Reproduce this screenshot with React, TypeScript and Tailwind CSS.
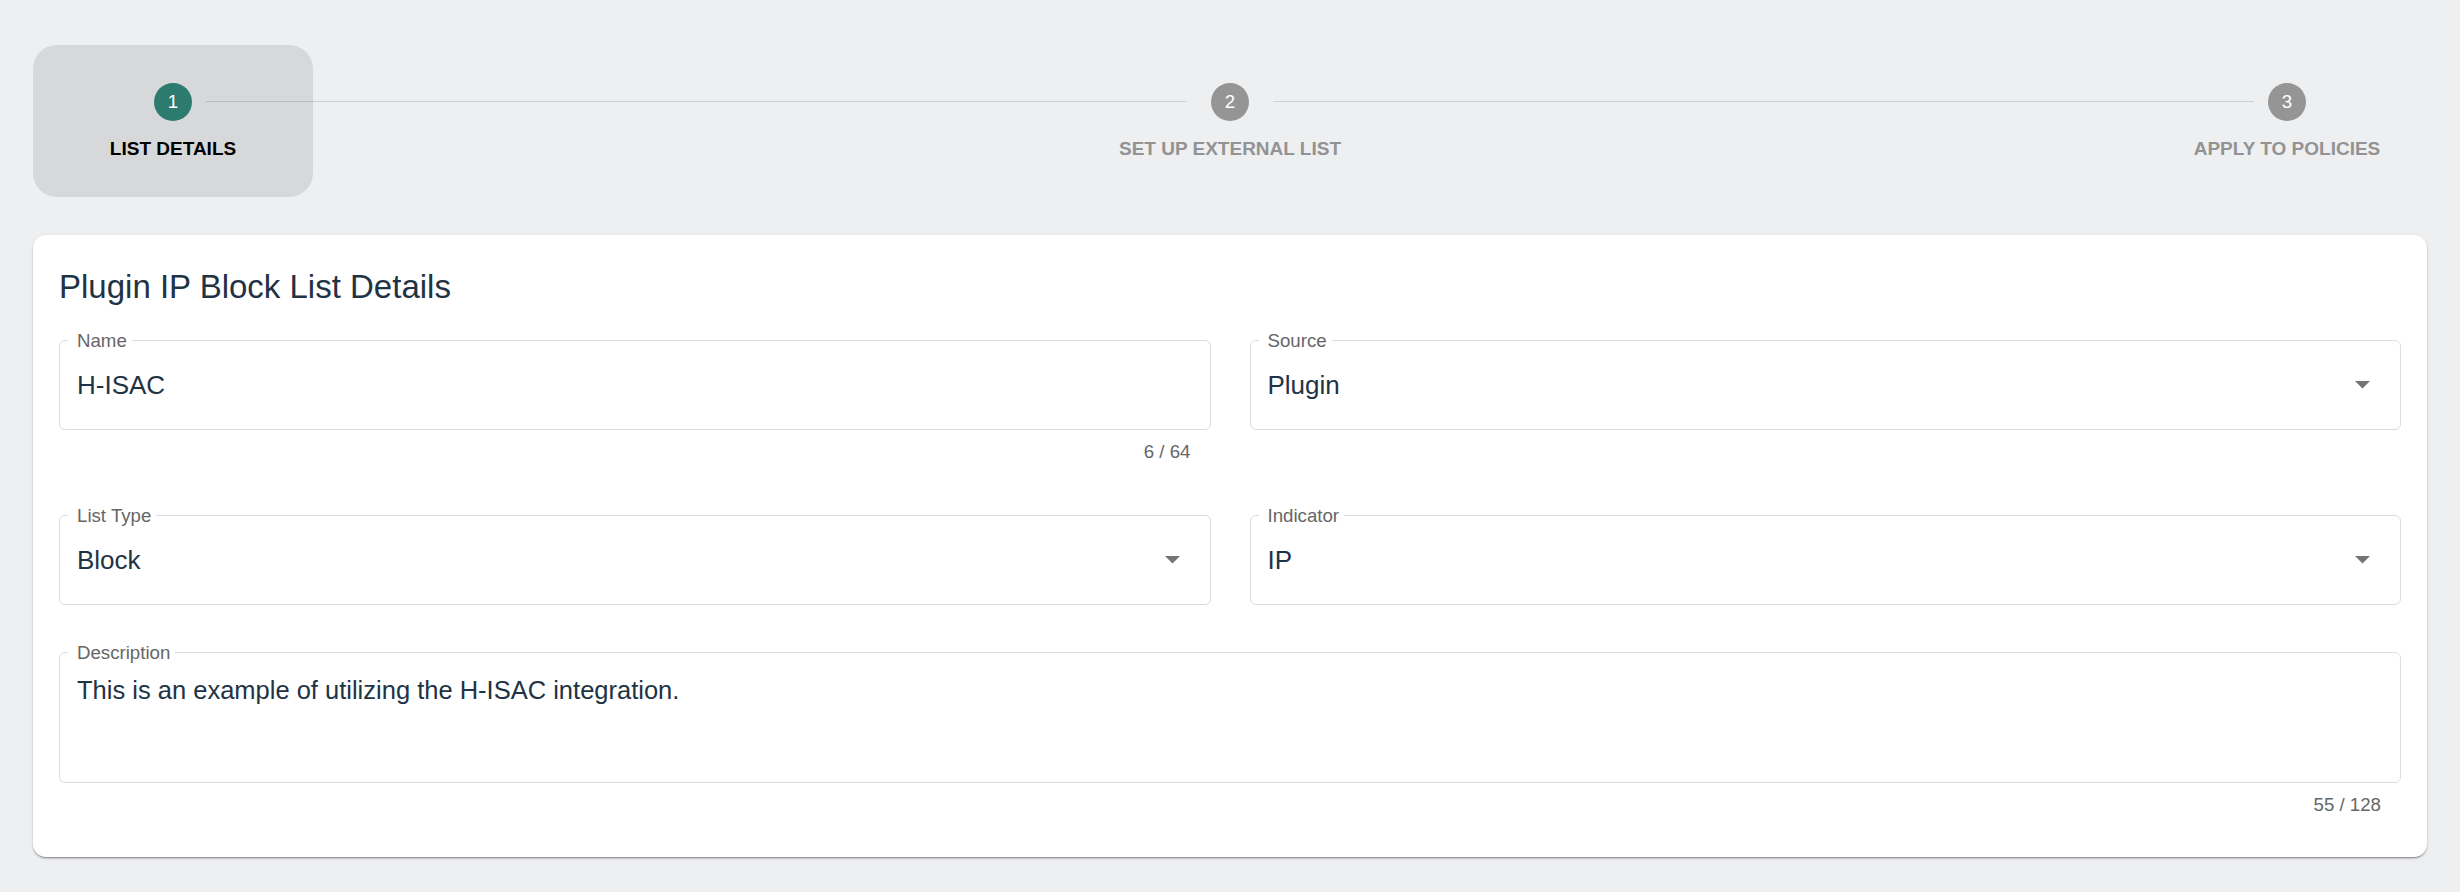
import React from 'react';

type StepProps = { n: number; label: string; active?: boolean };

function Step({ n, label, active }: StepProps) {
    return (
        <div
            className={`w-[280px] shrink-0 rounded-[24px] pt-[38px] pb-[37px] flex flex-col items-center ${
                active ? 'bg-[#d7d8da]' : ''
            }`}
        >
            <div
                className={`w-[38px] h-[38px] rounded-full flex items-center justify-center text-white text-[18.67px] leading-none ${
                    active ? 'bg-[#2c7b6e]' : 'bg-[#959595]'
                }`}
            >
                {n}
            </div>
            <div
                className={`mt-[16.5px] text-[19px] leading-[22px] font-bold whitespace-nowrap ${
                    active ? 'text-black' : 'text-[#939393]'
                }`}
            >
                {label}
            </div>
        </div>
    );
}

function DropArrow() {
    return (
        <svg width="15" height="8" viewBox="0 0 15 8" className="shrink-0">
            <path d="M0 0h15l-7.5 7.5z" fill="#757575" />
        </svg>
    );
}

type FieldProps = {
    label: string;
    value: string;
    select?: boolean;
    multiline?: boolean;
    counter?: string;
};

function Field({ label, value, select, multiline, counter }: FieldProps) {
    return (
        <div className="min-w-0">
            <fieldset className="min-w-0 border border-[#dcdcdc] rounded-[6px]">
                <legend className="ml-[8px] pl-[9px] pr-[5px] text-[18.67px] leading-[20px] text-[#666]">
                    {label}
                </legend>
                {multiline ? (
                    <div className="pl-[17px] pr-[30px] pt-[12px] pb-[77px] text-[25.5px] leading-[30px] text-[#1e3344]">
                        {value}
                    </div>
                ) : (
                    <div className="flex items-center pl-[17px] pr-[30px] pt-[19px] pb-[29px]">
                        <span className="flex-1 text-[26px] leading-[30px] text-[#1e3344]">{value}</span>
                        {select && <DropArrow />}
                    </div>
                )}
            </fieldset>
            {counter && (
                <div className="mt-[11px] pr-[20px] text-right text-[18.67px] leading-[22px] text-[#666]">
                    {counter}
                </div>
            )}
        </div>
    );
}

export default function App() {
    return (
        <div className="min-h-screen bg-[#eeeff1] px-[33px] pt-[45px] pb-[36px] font-['Liberation_Sans',Arial,sans-serif]">
            {/* Stepper */}
            <div className="flex">
                <Step n={1} label="LIST DETAILS" active />
                <div className="flex-1 h-px bg-black/[0.13] self-start mt-[56px] -ml-[107px] -mr-[97px]" />
                <Step n={2} label="SET UP EXTERNAL LIST" />
                <div className="flex-1 h-px bg-black/[0.13] self-start mt-[56px] -ml-[97px] -mr-[107px]" />
                <Step n={3} label="APPLY TO POLICIES" />
            </div>

            {/* Details card */}
            <div className="mt-[38px] bg-white rounded-[13px] px-[26px] pt-[33px] pb-[41px] shadow-[0_2px_2px_-1px_rgba(0,0,0,0.35),0_1px_2px_0_rgba(0,0,0,0.12),0_1px_4px_0_rgba(0,0,0,0.08)]">
                <h1 className="text-[33px] leading-[38px] font-normal text-[#1f3345]">Plugin IP Block List Details</h1>

                <div className="mt-[25px] grid grid-cols-2 gap-x-[39px] gap-y-[43px] items-start">
                    <Field label="Name" value="H-ISAC" counter="6 / 64" />
                    <Field label="Source" value="Plugin" select />
                    <Field label="List Type" value="Block" select />
                    <Field label="Indicator" value="IP" select />
                </div>

                <div className="mt-[38px]">
                    <Field
                        label="Description"
                        value="This is an example of utilizing the H-ISAC integration."
                        multiline
                        counter="55 / 128"
                    />
                </div>
            </div>
        </div>
    );
}
